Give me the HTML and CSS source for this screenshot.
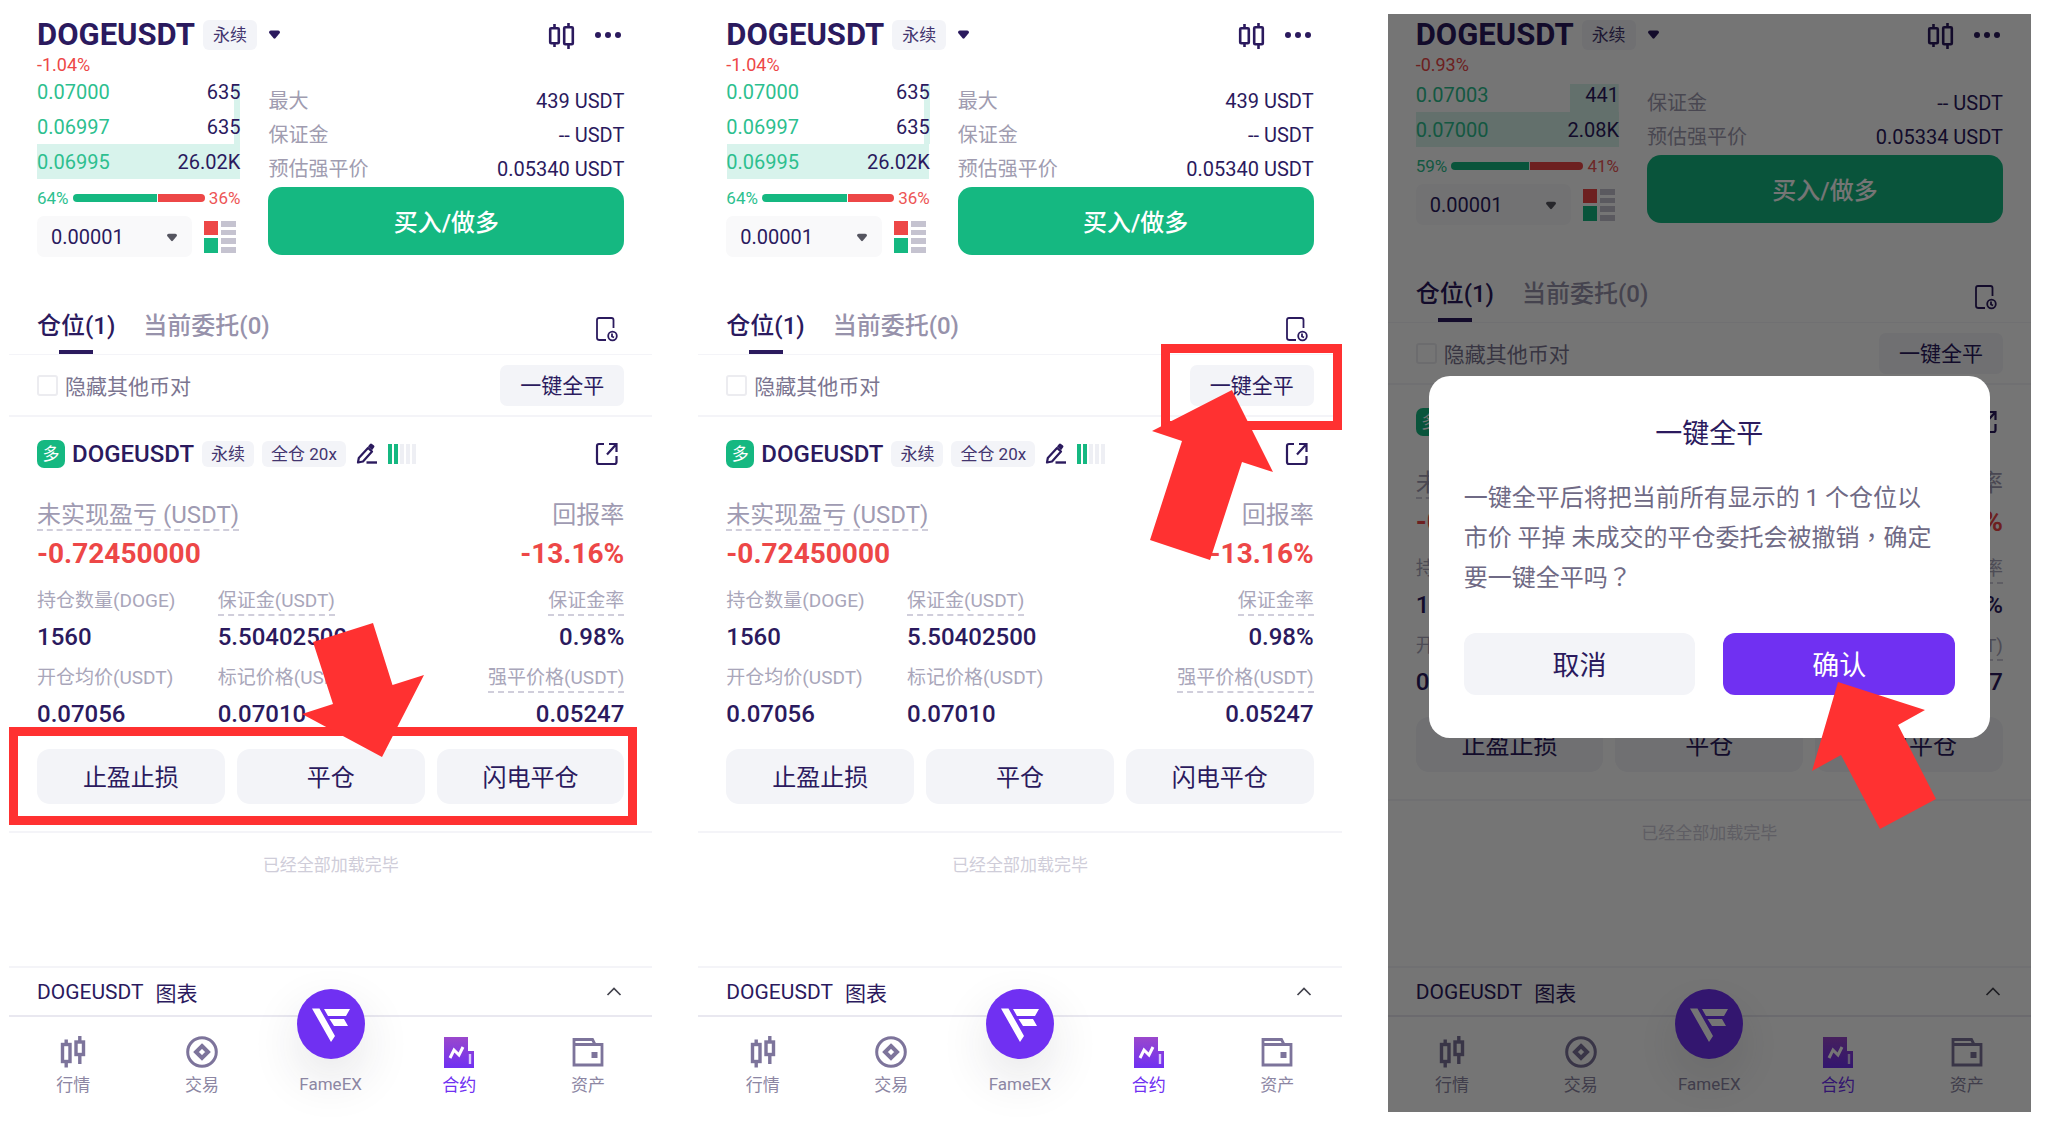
FILE: index.html
```html
<!DOCTYPE html>
<html lang="zh-CN">
<head>
  <meta charset="UTF-8">
  <meta name="viewport" content="width=device-width, initial-scale=1.0">
  <title>FameEX - 合约平仓</title>
  <link rel="stylesheet" href="styles.css">
</head>
<body>

  <!-- Icon sprite -->
  <svg class="sprite" aria-hidden="true">
    <symbol id="i-caret" viewBox="0 0 12 9"><path d="M2 0h8q2 0 2 2.500L7 8.500q-1 1-2 0L0 2.500Q0 0 2 0z" fill="currentColor"/></symbol>
    <symbol id="i-kline" viewBox="0 0 28 26">
      <g fill="none" stroke="currentColor" stroke-width="2.600"><rect x="2.200" y="5.200" width="8.600" height="15" rx="1"/><path d="M6.500 1v4M6.500 20.500v3.500"/><rect x="16.200" y="4.200" width="8.600" height="17" rx="1"/><path d="M20.500 0v4M20.500 21.500V26"/></g>
    </symbol>
    <symbol id="i-more" viewBox="0 0 28 8"><g fill="currentColor"><circle cx="4" cy="4" r="3"/><circle cx="14" cy="4" r="3"/><circle cx="24" cy="4" r="3"/></g></symbol>
    <symbol id="i-depth" viewBox="0 0 32 32">
      <path fill="#ed4747" d="M0 0h14v14H0z"/><path fill="#15b881" d="M0 17h14v15H0z"/>
      <path fill="#c5c3d0" d="M17 0h15v6H17zM17 9h15v5H17zM17 17h15v6H17zM17 26h15v6H17z"/>
    </symbol>
    <symbol id="i-record" viewBox="0 0 24 26">
      <g fill="none" stroke="currentColor" stroke-width="1.800"><path d="M11 24H4.500Q2 24 2 22V4q0-2 2-2h12.500q2 0 2 2v8"/><circle cx="17.500" cy="20" r="4.300"/><path d="M17 17.500v3l2 1"/></g>
    </symbol>
    <symbol id="i-edit" viewBox="0 0 22 22">
      <path d="M2 19.500l.8-4.500L12 5l4 3.500L7 18.500z" fill="none" stroke="currentColor" stroke-width="2.200" stroke-linejoin="round"/><path d="M12 3.500L14 1q1-1 2 0l2 1.600q1 1 0 2l-2 2.600z" fill="currentColor"/><path d="M10.500 19.500H21" stroke="currentColor" stroke-width="2.400"/>
    </symbol>
    <symbol id="i-level" viewBox="0 0 28 20">
      <path fill="#15b881" d="M0 0h4v20H0zM6 0h4v20H6z"/><path fill="#eeeff4" d="M12 0h4v20h-4zM18 0h4v20h-4zM24 0h4v20h-4z"/>
    </symbol>
    <symbol id="i-share" viewBox="0 0 24 24">
      <path d="M9 2H4Q2 2 2 4v16q0 2 2 2h15.500q2 0 2-2v-6M14 2h7.500v8M21 2.500L12 12.500" fill="none" stroke="currentColor" stroke-width="2.200"/>
    </symbol>
    <symbol id="i-up" viewBox="0 0 16 9"><path d="M1.500 8L8 1.500 14.500 8" fill="none" stroke="currentColor" stroke-width="1.700"/></symbol>
    <symbol id="i-market" viewBox="0 0 32 32">
      <g fill="none" stroke="currentColor" stroke-width="3.400"><rect x="5.500" y="8.500" width="7.500" height="17"/><path d="M9.200 3.500V8M9.200 25v6.500"/><rect x="19" y="6" width="7.500" height="12.500"/><path d="M22.800 0v6M22.800 18v10"/></g>
    </symbol>
    <symbol id="i-trade" viewBox="0 0 32 32">
      <g fill="none" stroke="currentColor" stroke-width="3"><circle cx="16" cy="16" r="14.300"/><path d="M16 10L22 16 16 22 10 16z" stroke-width="4"/></g>
    </symbol>
    <symbol id="i-futures" viewBox="0 0 32 32">
      <linearGradient id="fade" x1="0" y1="0" x2="0" y2="1"><stop offset="0" stop-color="#9a48cc"/><stop offset="1" stop-color="#7030f2"/></linearGradient>
      <path fill="url(#fade)" d="M1 1h24v14h6v17H1z"/><path d="M7 22l4-8 5 5 4-8" fill="none" stroke="#fff" stroke-width="3"/><path d="M27 18v10" stroke="#d9c8fb" stroke-width="2.400"/>
    </symbol>
    <symbol id="i-assets" viewBox="0 0 32 32">
      <path d="M2 10V3.500h18.500L23 8.500M2 8.500h28V29H2z" fill="none" stroke="currentColor" stroke-width="2.800"/><path d="M19.500 16h6v6h-6z" fill="currentColor"/>
    </symbol>
    <symbol id="i-fame" viewBox="0 0 68 70">
      <path fill="#fff" d="M15 19.500h7.500L38 47l-4 6zM27 20h26l-4 7H31zM32.500 30H47l4 7H37z"/>
    </symbol>
  </svg>

  <main class="screens">

    <!-- Screen 1: close a single position -->
    <section class="phone">
      <header class="pair-bar">
        <h2 class="pair-name">DOGEUSDT</h2>
        <span class="tag tag-lg">永续</span>
        <button class="icon-btn" aria-label="切换币对"><svg class="caret"><use href="#i-caret"/></svg></button>
        <button class="icon-btn push" aria-label="K线"><svg class="kline"><use href="#i-kline"/></svg></button>
        <button class="icon-btn more" aria-label="更多"><svg class="dots"><use href="#i-more"/></svg></button>
      </header>
      <div class="change">-1.04%</div>

      <div class="trade">
        <div class="book">
          <table class="orders">
            <tr style="--depth: 3%"><td>0.07000</td><td>635</td></tr>
            <tr style="--depth: 3%"><td>0.06997</td><td>635</td></tr>
            <tr style="--depth: 100%"><td>0.06995</td><td>26.02K</td></tr>
          </table>
          <div class="ratio">
            <span class="buy">64%</span>
            <div class="ratio-bar"><i class="bar-buy" style="width: 64%"></i><i class="bar-sell"></i></div>
            <span class="sell">36%</span>
          </div>
          <div class="precision">
            <label class="step"><select aria-label="深度精度"><option>0.00001</option></select><svg class="step-caret"><use href="#i-caret"/></svg></label>
            <button class="icon-btn" aria-label="盘口显示"><svg class="depth"><use href="#i-depth"/></svg></button>
          </div>
        </div>
        <div class="order">
          <div class="order-row"><span>最大</span><b>439 USDT</b></div>
          <div class="order-row"><span>保证金</span><b>-- USDT</b></div>
          <div class="order-row"><span>预估强平价</span><b>0.05340 USDT</b></div>
          <button class="buy-btn">买入/做多</button>
        </div>
      </div>

      <nav class="tabs">
        <button class="tab active">仓位(1)</button>
        <button class="tab">当前委托(0)</button>
        <button class="icon-btn push" aria-label="历史记录"><svg class="record"><use href="#i-record"/></svg></button>
      </nav>
      <div class="filter">
        <label class="hide-others"><input type="checkbox">隐藏其他币对</label>
        <div class="close-all"><button class="close-all-btn">一键全平</button></div>
      </div>

      <article class="position">
        <div class="position-head">
          <span class="side">多</span>
          <h3 class="position-name">DOGEUSDT</h3>
          <span class="tag">永续</span>
          <span class="tag">全仓 20x</span>
          <button class="icon-btn edit" aria-label="调整杠杆"><svg><use href="#i-edit"/></svg></button>
          <svg class="level"><use href="#i-level"/></svg>
          <button class="icon-btn push" aria-label="分享"><svg class="share"><use href="#i-share"/></svg></button>
        </div>
        <div class="pnl">
          <div><span class="pnl-label dotted">未实现盈亏 (USDT)</span><strong>-0.72450000</strong></div>
          <div><span class="pnl-label">回报率</span><strong>-13.16%</strong></div>
        </div>
        <dl class="fields">
          <div><dt>持仓数量(DOGE)</dt><dd>1560</dd></div>
          <div><dt class="dotted">保证金(USDT)</dt><dd>5.50402500</dd></div>
          <div><dt class="dotted">保证金率</dt><dd>0.98%</dd></div>
          <div><dt>开仓均价(USDT)</dt><dd>0.07056</dd></div>
          <div><dt>标记价格(USDT)</dt><dd>0.07010</dd></div>
          <div><dt class="dotted">强平价格(USDT)</dt><dd>0.05247</dd></div>
        </dl>
        <div class="actions">
          <button>止盈止损</button>
          <button>平仓</button>
          <button>闪电平仓</button>
          <div class="mark mark-actions"></div>
          <svg class="arrow arrow-down" viewBox="0 0 122 134"><path d="M71 0L90.500 62 122 52 80 134 0 91 31 81 11 19z"/></svg>
        </div>
      </article>
      <p class="loaded">已经全部加载完毕</p>

      <footer class="bottom">
        <button class="chart-bar"><span>DOGEUSDT</span><span>图表</span><svg class="up"><use href="#i-up"/></svg></button>
        <nav class="nav">
          <a href="#"><svg><use href="#i-market"/></svg>行情</a>
          <a href="#"><svg><use href="#i-trade"/></svg>交易</a>
          <a href="#"><svg class="fame"><use href="#i-fame"/></svg>FameEX</a>
          <a href="#" class="current"><svg><use href="#i-futures"/></svg>合约</a>
          <a href="#"><svg><use href="#i-assets"/></svg>资产</a>
        </nav>
      </footer>
    </section>

    <!-- Screen 2: close everything -->
    <section class="phone">
      <header class="pair-bar">
        <h2 class="pair-name">DOGEUSDT</h2>
        <span class="tag tag-lg">永续</span>
        <button class="icon-btn" aria-label="切换币对"><svg class="caret"><use href="#i-caret"/></svg></button>
        <button class="icon-btn push" aria-label="K线"><svg class="kline"><use href="#i-kline"/></svg></button>
        <button class="icon-btn more" aria-label="更多"><svg class="dots"><use href="#i-more"/></svg></button>
      </header>
      <div class="change">-1.04%</div>

      <div class="trade">
        <div class="book">
          <table class="orders">
            <tr style="--depth: 3%"><td>0.07000</td><td>635</td></tr>
            <tr style="--depth: 3%"><td>0.06997</td><td>635</td></tr>
            <tr style="--depth: 100%"><td>0.06995</td><td>26.02K</td></tr>
          </table>
          <div class="ratio">
            <span class="buy">64%</span>
            <div class="ratio-bar"><i class="bar-buy" style="width: 64%"></i><i class="bar-sell"></i></div>
            <span class="sell">36%</span>
          </div>
          <div class="precision">
            <label class="step"><select aria-label="深度精度"><option>0.00001</option></select><svg class="step-caret"><use href="#i-caret"/></svg></label>
            <button class="icon-btn" aria-label="盘口显示"><svg class="depth"><use href="#i-depth"/></svg></button>
          </div>
        </div>
        <div class="order">
          <div class="order-row"><span>最大</span><b>439 USDT</b></div>
          <div class="order-row"><span>保证金</span><b>-- USDT</b></div>
          <div class="order-row"><span>预估强平价</span><b>0.05340 USDT</b></div>
          <button class="buy-btn">买入/做多</button>
        </div>
      </div>

      <nav class="tabs">
        <button class="tab active">仓位(1)</button>
        <button class="tab">当前委托(0)</button>
        <button class="icon-btn push" aria-label="历史记录"><svg class="record"><use href="#i-record"/></svg></button>
      </nav>
      <div class="filter">
        <label class="hide-others"><input type="checkbox">隐藏其他币对</label>
        <div class="close-all">
          <button class="close-all-btn">一键全平</button>
          <div class="mark mark-close"></div>
          <svg class="arrow arrow-up" viewBox="0 0 123 170"><path d="M82 0L123 82 92 72 60 170 0 150 32 51 2 41z"/></svg>
        </div>
      </div>

      <article class="position">
        <div class="position-head">
          <span class="side">多</span>
          <h3 class="position-name">DOGEUSDT</h3>
          <span class="tag">永续</span>
          <span class="tag">全仓 20x</span>
          <button class="icon-btn edit" aria-label="调整杠杆"><svg><use href="#i-edit"/></svg></button>
          <svg class="level"><use href="#i-level"/></svg>
          <button class="icon-btn push" aria-label="分享"><svg class="share"><use href="#i-share"/></svg></button>
        </div>
        <div class="pnl">
          <div><span class="pnl-label dotted">未实现盈亏 (USDT)</span><strong>-0.72450000</strong></div>
          <div><span class="pnl-label">回报率</span><strong>-13.16%</strong></div>
        </div>
        <dl class="fields">
          <div><dt>持仓数量(DOGE)</dt><dd>1560</dd></div>
          <div><dt class="dotted">保证金(USDT)</dt><dd>5.50402500</dd></div>
          <div><dt class="dotted">保证金率</dt><dd>0.98%</dd></div>
          <div><dt>开仓均价(USDT)</dt><dd>0.07056</dd></div>
          <div><dt>标记价格(USDT)</dt><dd>0.07010</dd></div>
          <div><dt class="dotted">强平价格(USDT)</dt><dd>0.05247</dd></div>
        </dl>
        <div class="actions">
          <button>止盈止损</button>
          <button>平仓</button>
          <button>闪电平仓</button>
        </div>
      </article>
      <p class="loaded">已经全部加载完毕</p>

      <footer class="bottom">
        <button class="chart-bar"><span>DOGEUSDT</span><span>图表</span><svg class="up"><use href="#i-up"/></svg></button>
        <nav class="nav">
          <a href="#"><svg><use href="#i-market"/></svg>行情</a>
          <a href="#"><svg><use href="#i-trade"/></svg>交易</a>
          <a href="#"><svg class="fame"><use href="#i-fame"/></svg>FameEX</a>
          <a href="#" class="current"><svg><use href="#i-futures"/></svg>合约</a>
          <a href="#"><svg><use href="#i-assets"/></svg>资产</a>
        </nav>
      </footer>
    </section>

    <!-- Screen 3: confirm dialog -->
    <section class="phone">
      <header class="pair-bar">
        <h2 class="pair-name">DOGEUSDT</h2>
        <span class="tag tag-lg">永续</span>
        <button class="icon-btn" aria-label="切换币对"><svg class="caret"><use href="#i-caret"/></svg></button>
        <button class="icon-btn push" aria-label="K线"><svg class="kline"><use href="#i-kline"/></svg></button>
        <button class="icon-btn more" aria-label="更多"><svg class="dots"><use href="#i-more"/></svg></button>
      </header>
      <div class="change">-0.93%</div>

      <div class="trade">
        <div class="book">
          <table class="orders short">
            <tr style="--depth: 24%"><td>0.07003</td><td>441</td></tr>
            <tr style="--depth: 100%"><td>0.07000</td><td>2.08K</td></tr>
          </table>
          <div class="ratio">
            <span class="buy">59%</span>
            <div class="ratio-bar"><i class="bar-buy" style="width: 59%"></i><i class="bar-sell"></i></div>
            <span class="sell">41%</span>
          </div>
          <div class="precision">
            <label class="step"><select aria-label="深度精度"><option>0.00001</option></select><svg class="step-caret"><use href="#i-caret"/></svg></label>
            <button class="icon-btn" aria-label="盘口显示"><svg class="depth"><use href="#i-depth"/></svg></button>
          </div>
        </div>
        <div class="order">
          <div class="order-row"><span>保证金</span><b>-- USDT</b></div>
          <div class="order-row"><span>预估强平价</span><b>0.05334 USDT</b></div>
          <button class="buy-btn">买入/做多</button>
        </div>
      </div>

      <nav class="tabs">
        <button class="tab active">仓位(1)</button>
        <button class="tab">当前委托(0)</button>
        <button class="icon-btn push" aria-label="历史记录"><svg class="record"><use href="#i-record"/></svg></button>
      </nav>
      <div class="filter">
        <label class="hide-others"><input type="checkbox">隐藏其他币对</label>
        <div class="close-all"><button class="close-all-btn">一键全平</button></div>
      </div>

      <article class="position">
        <div class="position-head">
          <span class="side">多</span>
          <h3 class="position-name">DOGEUSDT</h3>
          <span class="tag">永续</span>
          <span class="tag">全仓 20x</span>
          <button class="icon-btn edit" aria-label="调整杠杆"><svg><use href="#i-edit"/></svg></button>
          <svg class="level"><use href="#i-level"/></svg>
          <button class="icon-btn push" aria-label="分享"><svg class="share"><use href="#i-share"/></svg></button>
        </div>
        <div class="pnl">
          <div><span class="pnl-label dotted">未实现盈亏 (USDT)</span><strong>-0.72450000</strong></div>
          <div><span class="pnl-label">回报率</span><strong>-13.16%</strong></div>
        </div>
        <dl class="fields">
          <div><dt>持仓数量(DOGE)</dt><dd>1560</dd></div>
          <div><dt class="dotted">保证金(USDT)</dt><dd>5.50402500</dd></div>
          <div><dt class="dotted">保证金率</dt><dd>0.98%</dd></div>
          <div><dt>开仓均价(USDT)</dt><dd>0.07056</dd></div>
          <div><dt>标记价格(USDT)</dt><dd>0.07010</dd></div>
          <div><dt class="dotted">强平价格(USDT)</dt><dd>0.05247</dd></div>
        </dl>
        <div class="actions">
          <button>止盈止损</button>
          <button>平仓</button>
          <button>闪电平仓</button>
        </div>
      </article>
      <p class="loaded">已经全部加载完毕</p>

      <footer class="bottom">
        <button class="chart-bar"><span>DOGEUSDT</span><span>图表</span><svg class="up"><use href="#i-up"/></svg></button>
        <nav class="nav">
          <a href="#"><svg><use href="#i-market"/></svg>行情</a>
          <a href="#"><svg><use href="#i-trade"/></svg>交易</a>
          <a href="#"><svg class="fame"><use href="#i-fame"/></svg>FameEX</a>
          <a href="#" class="current"><svg><use href="#i-futures"/></svg>合约</a>
          <a href="#"><svg><use href="#i-assets"/></svg>资产</a>
        </nav>
      </footer>

      <div class="overlay">
        <div class="dialog" role="dialog" aria-labelledby="dialog-title">
          <h3 class="dialog-title" id="dialog-title">一键全平</h3>
          <p class="dialog-text">一键全平后将把当前所有显示的 1 个仓位以市价 平掉 未成交的平仓委托会被撤销<span lang="zh-TW">，</span>确定要一键全平吗<span lang="zh-TW">？</span></p>
          <div class="dialog-actions">
            <button class="cancel">取消</button>
            <div class="confirm-wrap">
              <button class="confirm">确认</button>
              <svg class="arrow arrow-confirm" viewBox="0 0 124 147"><path d="M26 0L113 28 86 43 124 117 68 147 29 73 0 89z"/></svg>
            </div>
          </div>
        </div>
      </div>
    </section>

  </main>

</body>
</html>
```
FILE: styles.css
```css
/* General Reset */
* {
  margin: 0;
  padding: 0;
  box-sizing: border-box;
}

body {
  background: #fff;
  color: #2b1a5e;
  font-family: Roboto, "Noto Sans CJK SC", sans-serif;
  font-size: 20px;
}

button,
select,
input {
  font: inherit;
  color: inherit;
  border: none;
  background: none;
  cursor: pointer;
}

a {
  color: inherit;
  text-decoration: none;
}

svg {
  display: block;
  flex: none;
}

.sprite {
  position: absolute;
  width: 0;
  height: 0;
}

/* Three screens side by side */
.screens {
  display: grid;
  grid-template-columns: repeat(3, minmax(0, 1fr));
  gap: 46px;
  min-height: 100vh;
  padding: 14px 17px 17px 9px;
}

.phone {
  position: relative;
  display: flex;
  flex-direction: column;
}

.icon-btn {
  display: flex;
  align-items: center;
}

.push {
  margin-left: auto;
}

/* Pair header */
.pair-bar {
  display: flex;
  align-items: center;
  height: 41px;
  padding: 0 30px 0 28px;
}

.pair-name {
  font-size: 31px;
  line-height: 41px;
  font-weight: 700;
}

.tag {
  margin-left: 8px;
  padding: 0 9px;
  border-radius: 6px;
  background: #f3f4f8;
  color: #43356f;
  font-size: 17px;
  line-height: 26px;
  white-space: nowrap;
}

.tag-lg {
  padding: 0 10px;
  line-height: 30px;
}

.caret {
  width: 11px;
  height: 9px;
  margin-left: 12px;
}

.kline {
  width: 28px;
  height: 26px;
  margin-top: 3px;
}

.more {
  margin-left: 18px;
}

.dots {
  width: 28px;
  height: 8px;
}

.change {
  padding: 0 28px;
  margin-bottom: 9px;
  color: #ed4747;
  font-size: 18px;
  line-height: 20px;
}

/* Order book and order form */
.trade {
  display: grid;
  grid-template-columns: 4fr 7fr;
  gap: 28px;
  padding: 0 28px;
}

.orders {
  width: 100%;
  border-collapse: collapse;
}

.orders tr {
  height: 35px;
  background: linear-gradient(#d8f3ec, #d8f3ec) right / var(--depth) 100% no-repeat;
}

.orders tr:first-child {
  height: 25px;
}

.orders.short tr:first-child {
  height: 28px;
}

.orders td {
  padding-bottom: 8px;
  line-height: 17px;
  vertical-align: bottom;
}

.orders td:first-child,
.buy {
  color: #2dbf8f;
}

.orders td:last-child {
  text-align: right;
}

.sell {
  color: #ed5555;
}

.ratio {
  display: flex;
  align-items: center;
  gap: 4px;
  height: 37px;
  font-size: 17px;
}

.ratio-bar {
  display: flex;
  flex: 1;
  gap: 1px;
  height: 8px;
  border-radius: 4px;
  overflow: hidden;
}

.bar-buy {
  background: #15b881;
}

.bar-sell {
  flex: 1;
  background: #ed4747;
}

.precision {
  display: flex;
  align-items: center;
  gap: 12px;
  padding-right: 4px;
}

.step {
  position: relative;
  flex: 1;
}

.step select {
  display: block;
  width: 100%;
  height: 41px;
  padding: 0 14px;
  border-radius: 7px;
  background: #f9f9fa;
  appearance: none;
}

.step-caret {
  position: absolute;
  right: 15px;
  top: 17px;
  width: 10px;
  height: 9px;
  color: #55555f;
  pointer-events: none;
}

.depth {
  width: 32px;
  height: 32px;
}

.order {
  align-self: end;
  padding-bottom: 2px;
}

.order-row {
  display: flex;
  justify-content: space-between;
  line-height: 34px;
}

.order-row span {
  color: #a09cb0;
}

.order-row b {
  font-weight: 400;
}

.buy-btn {
  display: block;
  width: 100%;
  height: 68px;
  margin-top: 1px;
  padding-bottom: 2px;
  border-radius: 14px;
  background: #15b881;
  color: #fff;
  font-size: 24px;
  font-weight: 500;
}

/* Tabs */
.tabs {
  display: flex;
  align-items: flex-start;
  gap: 28px;
  margin-top: 53px;
  padding: 0 33px 0 28px;
  border-bottom: 1px solid #f4f4f8;
}

.tab {
  height: 44px;
  padding-bottom: 12px;
  color: #9792ab;
  font-size: 24px;
  line-height: 32px;
  font-weight: 500;
}

.tab.active {
  color: #2b1a5e;
  background: linear-gradient(#2b1a5e, #2b1a5e) bottom / 34px 4px no-repeat;
}

.record {
  width: 24px;
  height: 26px;
  margin-top: 6px;
}

.filter {
  display: flex;
  align-items: center;
  justify-content: space-between;
  height: 62px;
  padding: 0 28px;
  border-bottom: 2px solid #f4f4f8;
}

.hide-others {
  display: flex;
  align-items: center;
  gap: 7px;
  color: #7b7590;
  font-size: 21px;
}

.hide-others input {
  width: 21px;
  height: 21px;
  border: 2px solid #ececf0;
  border-radius: 3px;
  background: #fff;
  appearance: none;
}

.close-all {
  position: relative;
}

.close-all-btn {
  display: block;
  height: 41px;
  padding: 0 20px 2px;
  border-radius: 7px;
  background: #f3f4f8;
  font-size: 21px;
}

/* Position card */
.position {
  padding: 23px 28px 27px;
  border-bottom: 2px solid #f4f4f8;
}

.position-head {
  display: flex;
  align-items: center;
  height: 28px;
  padding-right: 5px;
}

.side {
  width: 28px;
  margin-right: 7px;
  border-radius: 7px;
  background: #15b881;
  color: #fff;
  font-size: 17px;
  line-height: 28px;
  text-align: center;
}

.position-name {
  font-size: 24px;
  line-height: 28px;
  font-weight: 500;
}

.edit {
  margin: 0 10px;
}

.edit svg {
  width: 22px;
  height: 22px;
}

.level {
  width: 28px;
  height: 20px;
}

.share {
  width: 24px;
  height: 24px;
}

.pnl {
  display: flex;
  justify-content: space-between;
  margin-top: 32px;
}

.pnl div {
  display: flex;
  flex-direction: column;
  align-items: flex-start;
}

.pnl div:last-child {
  align-items: flex-end;
}

.pnl-label {
  height: 31px;
  color: #9f9bb2;
  font-size: 24px;
  line-height: 30px;
}

.pnl strong {
  margin-top: 6px;
  color: #ed4747;
  font-size: 28px;
  line-height: 34px;
  font-weight: 700;
}

.dotted {
  border-bottom: 2px dashed #d0cedb;
}

.fields {
  display: grid;
  grid-template-columns: 4fr 5fr 4fr;
  row-gap: 13px;
  margin-top: 17px;
}

.fields div {
  display: flex;
  flex-direction: column;
  align-items: flex-start;
}

.fields div:nth-child(3n) {
  align-items: flex-end;
}

.fields dt {
  height: 28px;
  color: #a9a6ba;
  font-size: 19px;
  line-height: 26px;
  white-space: nowrap;
}

.fields dd {
  margin-top: 6px;
  font-size: 24px;
  line-height: 30px;
  font-weight: 500;
}

.actions {
  position: relative;
  display: grid;
  grid-template-columns: repeat(3, 1fr);
  gap: 12px;
  margin-top: 20px;
}

.actions button {
  height: 55px;
  padding-bottom: 2px;
  border-radius: 13px;
  background: #f3f4f8;
  font-size: 24px;
}

.loaded {
  margin-top: 20px;
  color: #cfcdd9;
  font-size: 17px;
  line-height: 24px;
  text-align: center;
}

/* Chart bar and navigation */
.bottom {
  margin-top: auto;
  border-top: 2px solid #f4f4f8;
}

.chart-bar {
  display: flex;
  align-items: center;
  gap: 12px;
  width: 100%;
  height: 47px;
  padding: 0 30px 0 28px;
  font-size: 21px;
}

.up {
  width: 16px;
  height: 9px;
  margin-left: auto;
  color: #43434d;
}

.nav {
  display: grid;
  grid-template-columns: repeat(5, 1fr);
  height: 97px;
  padding-top: 19px;
  border-top: 2px solid #e9e8f0;
}

.nav a {
  display: flex;
  flex-direction: column;
  align-items: center;
  color: #8c86a3;
  font-size: 17px;
  line-height: 22px;
}

.nav svg {
  width: 32px;
  height: 32px;
  margin-bottom: 6px;
  color: #7d749b;
}

.nav .fame {
  width: 68px;
  height: 70px;
  margin: -47px 0 14px;
  border-radius: 50%;
  background: #7030f2;
  box-shadow: 0 20px 50px rgba(40, 40, 60, 0.12);
}

.nav .current {
  color: #7030f2;
}

/* Confirm dialog */
.overlay {
  position: absolute;
  inset: 0;
  display: flex;
  align-items: center;
  padding: 0 41px 13px;
  background: rgba(0, 0, 0, 0.54);
}

.dialog {
  flex: 1;
  padding: 38px 35px 43px;
  border-radius: 21px;
  background: #fff;
}

.dialog-title {
  font-size: 27px;
  line-height: 40px;
  font-weight: 400;
  text-align: center;
}

.dialog-text {
  margin-top: 24px;
  padding-right: 12px;
  color: #6f6a85;
  font-size: 24px;
  line-height: 40px;
}

.dialog-actions {
  display: grid;
  grid-template-columns: 1fr 1fr;
  gap: 28px;
  margin-top: 35px;
}

.confirm-wrap {
  position: relative;
}

.cancel,
.confirm {
  display: block;
  width: 100%;
  height: 62px;
  border-radius: 12px;
  background: #f3f4f8;
  font-size: 27px;
}

.confirm {
  background: #7030f2;
  color: #fff;
}

/* Red guide marks */
.mark {
  position: absolute;
  border: 9px solid #ff3131;
  pointer-events: none;
}

.mark-actions {
  inset: -22px -13px -21px -28px;
}

.mark-close {
  inset: -21px -28px -24px -29px;
}

.arrow {
  position: absolute;
  z-index: 1;
  fill: #ff3131;
  pointer-events: none;
}

.arrow-down {
  top: -126px;
  right: 200px;
  width: 122px;
}

.arrow-up {
  top: 25px;
  left: -40px;
  width: 123px;
}

.arrow-confirm {
  top: 49px;
  left: 89px;
  width: 124px;
}
```
